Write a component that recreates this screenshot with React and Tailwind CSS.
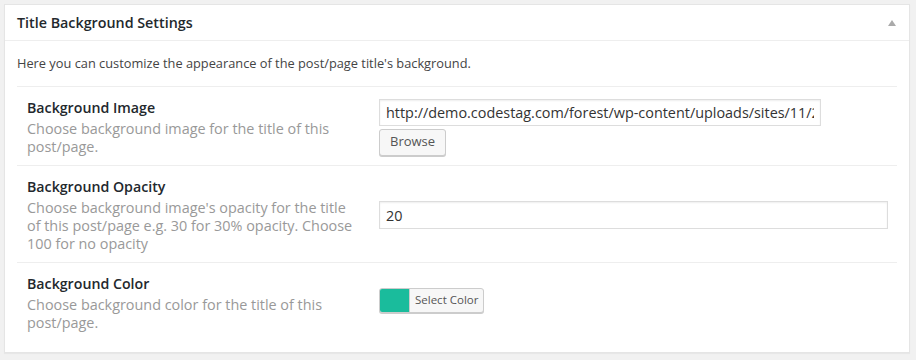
import React from 'react';

const FONT = { fontFamily: '"Open Sans", "Noto Sans", Arial, sans-serif' };

function Row({ label, desc, children, last }) {
  return (
    <div className={`flex items-center pl-[10px] pt-[11px] pb-[9px] ${last ? '' : 'border-b border-[#eeeeee]'}`}>
      <div className="w-[352px] shrink-0 pr-[20px]">
        <div className="text-[14.2px] leading-[20px] font-semibold text-[#23282d]">{label}</div>
        <div className="mt-[2px] text-[14.4px] leading-[18px] text-[#999999]">{desc}</div>
      </div>
      <div className="flex-1 pr-[9px]">{children}</div>
    </div>
  );
}

export default function App() {
  return (
    <div className="min-h-[360px] bg-[#f1f1f1] pt-[4px] pl-[4px] pr-[6px]" style={FONT}>
      <div className="bg-white border border-[#e5e5e5] shadow-[0_1px_1px_rgba(0,0,0,0.04)]">
        {/* Header */}
        <div className="flex items-center justify-between h-[36px] pl-[12px] pr-[13px] border-b border-[#eeeeee]">
          <h2 className="text-[14.3px] font-semibold text-[#23282d]">Title Background Settings</h2>
          <svg width="8" height="6" viewBox="0 0 8 6" className="mt-[1px]">
            <path d="M4 0 L8 6 L0 6 Z" fill="#aaaaaa" />
          </svg>
        </div>

        {/* Body */}
        <div className="px-[12px] pb-[11px]">
          <p className="pt-[12px] pb-[13px] text-[12.8px] leading-[20px] text-[#444444] border-b border-[#eeeeee]">
            Here you can customize the appearance of the post/page title's background.
          </p>

          <Row
            label="Background Image"
            desc="Choose background image for the title of this post/page."
          >
            <input
              type="text"
              readOnly
              value="http://demo.codestag.com/forest/wp-content/uploads/sites/11/2014/08/bg.jpg"
              className="block w-[442px] h-[27px] px-[6px] text-[14.4px] text-[#333333] border border-[#dddddd] shadow-[inset_0_1px_2px_rgba(0,0,0,0.07)] outline-none"
              style={FONT}
            />
            <button
              className="mt-[3px] h-[27px] px-[10px] text-[13px] text-[#555555] bg-[#f7f7f7] border border-[#cccccc] rounded-[3px] shadow-[0_1px_0_#cccccc]"
              style={FONT}
            >
              Browse
            </button>
          </Row>

          <Row
            label="Background Opacity"
            desc="Choose background image's opacity for the title of this post/page e.g. 30 for 30% opacity. Choose 100 for no opacity"
          >
            <input
              type="text"
              readOnly
              value="20"
              className="block w-full h-[28px] px-[6px] text-[14.4px] text-[#333333] border border-[#dddddd] shadow-[inset_0_1px_2px_rgba(0,0,0,0.07)] outline-none"
              style={FONT}
            />
          </Row>

          <Row
            label="Background Color"
            desc="Choose background color for the title of this post/page."
            last
          >
            <button
              className="flex items-stretch h-[25px] -mt-[6px] border border-[#cccccc] rounded-[3px] overflow-hidden bg-[#f7f7f7] shadow-[0_1px_0_#cccccc]"
              style={FONT}
            >
              <span className="w-[30px] bg-[#1abc9c] border-r border-[#cccccc]"></span>
              <span className="flex items-center px-[5px] text-[11.5px] text-[#555555]">Select Color</span>
            </button>
          </Row>
        </div>
      </div>
    </div>
  );
}
